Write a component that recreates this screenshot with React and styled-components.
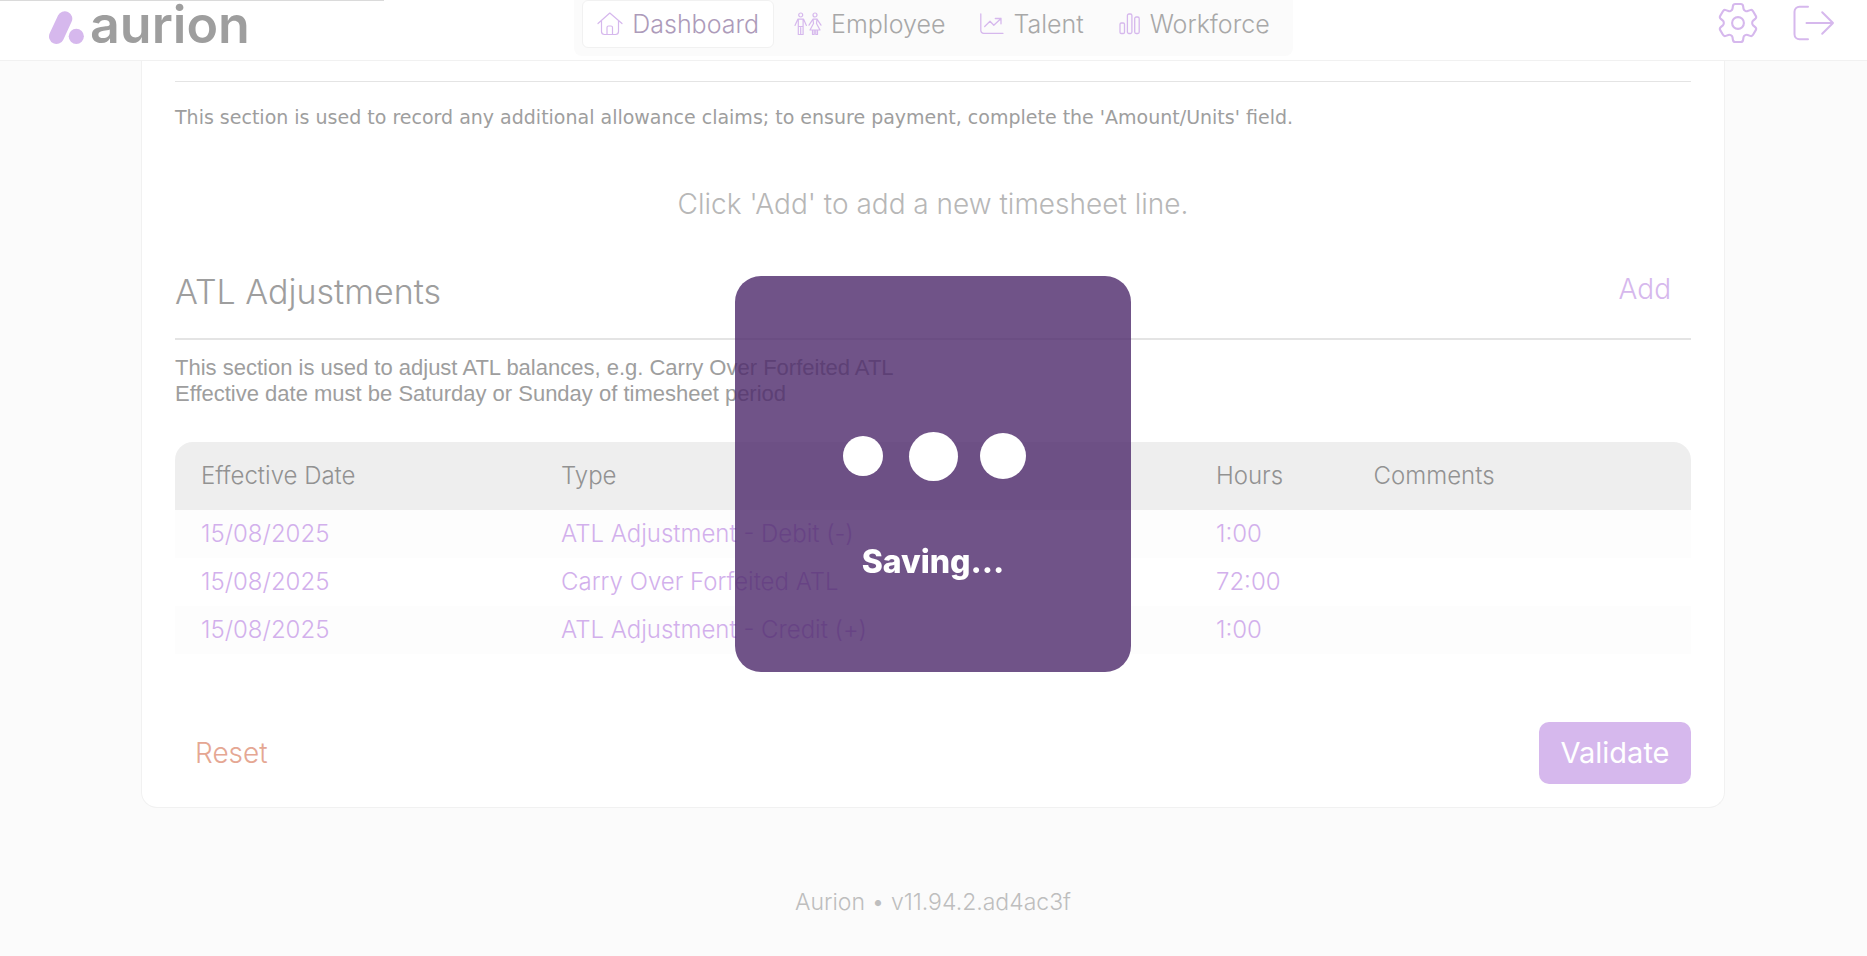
import React from "react";
import styled, { createGlobalStyle, css } from "styled-components";

const c = {
  lilac: "#d6b8ed",
  grey: "#9e9e9e",
  line: "#e4e4e4",
  edge: "#f1f1f1",
  page: "#fbfbfb",
};

const GlobalStyle = createGlobalStyle`
  *, *::before, *::after { box-sizing: border-box; }
  body {
    margin: 0;
    background: ${c.page};
    color: ${c.grey};
    font-family: Inter, "Liberation Sans", sans-serif;
    font-weight: 300;
  }
  h2, p { margin: 0; font-weight: inherit; }
  a { color: inherit; text-decoration: none; }
  button { border: 0; padding: 0; background: none; font: inherit; color: inherit; cursor: pointer; }
  svg { display: block; flex: none; fill: none; stroke: currentColor; stroke-linecap: round; stroke-linejoin: round; }
`;

const Header = styled.header`
  display: grid;
  grid-template-columns: 1fr auto 1fr;
  align-items: start;
  height: 61px;
  padding: 0 32px;
  background: #fff;
  border-bottom: 1px solid ${c.edge};
`;

const LoadBar = styled.div`
  position: absolute;
  top: 0;
  left: 0;
  width: 384px;
  height: 1px;
  background: #dadada;
`;

const Brand = styled.a`
  display: flex;
  align-items: flex-start;
  gap: 6px;
  height: 60px;
  padding-left: 17px;
`;

const BrandMark = styled.svg`
  margin-top: 10px;
  color: ${c.lilac};
`;

const BrandName = styled.span`
  font-size: 52px;
  line-height: 50px;
  font-weight: 600;
`;

const Nav = styled.nav`
  display: flex;
  gap: 5px;
  padding: 0 8px 8px;
  border-radius: 0 0 8px 8px;
  background: ${c.page};
`;

const NavItem = styled.a`
  display: flex;
  align-items: center;
  gap: 9px;
  height: 48px;
  padding: 0 14px;
  border: 1px solid transparent;
  border-radius: 6px;
  font-size: 25px;
  color: #a8a8a8;
  svg { color: ${c.lilac}; }
  ${(p) => p.$active && css`
    background: #fff;
    border-color: ${c.edge};
    color: #ad9bba;
  `}
`;

const Tools = styled.div`
  display: flex;
  justify-content: flex-end;
  align-items: center;
  gap: 35px;
  height: 46px;
  color: ${c.lilac};
`;

const Content = styled.div`
  padding: 0 142px 0 141px;
`;

const Card = styled.main`
  max-width: 1584px;
  margin: 0 auto;
  padding: 20px 33px 23px;
  background: #fff;
  border: 1px solid ${c.edge};
  border-top: 0;
  border-radius: 0 0 16px 16px;
`;

const Rule = styled.hr`
  height: 1px;
  margin: 0;
  border: 0;
  background: ${c.line};
`;

const AllowanceNote = styled.p`
  margin-top: 23px;
  font: 400 19px/24px "DejaVu Sans", sans-serif;
`;

const EmptyMessage = styled.p`
  margin-top: 55px;
  font-size: 28px;
  line-height: 40px;
  text-align: center;
  color: #b7b7b7;
`;

const SectionHead = styled.div`
  display: flex;
  justify-content: space-between;
  align-items: flex-start;
  height: 73px;
  margin-top: 43px;
  border-bottom: 2px solid ${c.line};
`;

const SectionTitle = styled.h2`
  font-size: 34px;
  line-height: 50px;
`;

const TextButton = styled.button`
  padding: 0 20px;
  font-size: 28px;
  line-height: 44px;
  color: ${(p) => (p.$danger ? "#e5a793" : c.lilac)};
`;

const SectionNote = styled.p`
  margin: 15px 0 35px;
  font: 400 22px/26px "Liberation Sans", sans-serif;
`;

const Lines = styled.table`
  width: 100%;
  table-layout: fixed;
  border-spacing: 0;
  font-size: 24px;
  text-align: left;
`;

const HeadCell = styled.th`
  width: ${(p) => p.$width || "auto"};
  height: 68px;
  padding: 0 0 2px 26px;
  background: #eee;
  font-weight: 300;
  color: #929292;
  &:first-child { border-top-left-radius: 18px; }
  &:last-child { border-top-right-radius: 18px; }
`;

const Row = styled.tr`
  background: ${(p) => (p.$shaded ? "#fdfdfd" : "#fff")};
`;

const Cell = styled.td`
  height: 48px;
  padding: 0 0 2px 26px;
  color: #d2b0ec;
`;

const Actions = styled.div`
  display: flex;
  justify-content: space-between;
  align-items: center;
  margin-top: 68px;
`;

const PrimaryButton = styled.button`
  min-width: 152px;
  height: 62px;
  padding-bottom: 2px;
  border-radius: 10px;
  background: ${c.lilac};
  font-size: 29px;
  font-weight: 400;
  color: #fff;
`;

const Footer = styled.footer`
  padding: 77px 0 36px;
  font-size: 23px;
  line-height: 34px;
  text-align: center;
  color: #bebebe;
`;

const Overlay = styled.div`
  position: fixed;
  inset: 0;
  display: flex;
  align-items: center;
  justify-content: center;
  padding: 0 1px 8px 0;
`;

const SavingPanel = styled.div`
  width: 396px;
  height: 396px;
  padding-top: 155px;
  border-radius: 26px;
  background: rgba(76, 40, 106, 0.8);
  font-size: 32px;
  line-height: 40px;
  font-weight: 800;
  text-align: center;
  color: #fff;
`;

const Dots = styled.div`
  display: grid;
  grid-template-columns: repeat(3, 70px);
  justify-content: center;
  place-items: center;
  height: 50px;
  margin-bottom: 61px;
`;

const Dot = styled.span`
  width: ${(p) => p.$size}px;
  height: ${(p) => p.$size}px;
  border-radius: 50%;
  background: #fff;
`;

const HouseIcon = () => (
  <svg width="26" height="24" viewBox="0 0 26 24" strokeWidth="1.2" aria-hidden="true">
    <path d="M1 11.5 12.8 1 25 11.5M4.5 9v10.5a3 3 0 0 0 3 3h11a3 3 0 0 0 3-3V9M10 22.5v-7a1.5 1.5 0 0 1 1.5-1.5H14a1.5 1.5 0 0 1 1.5 1.5v7" />
  </svg>
);

const PeopleIcon = () => (
  <svg width="28" height="24" viewBox="0 0 28 24" strokeWidth="1.2" aria-hidden="true">
    <circle cx="6.7" cy="3" r="2" />
    <path d="M1 13.5 3.800 7.2h5.8l2.8 6.3M4.3 7.2v15.3h1.9M9.1 7.2v15.300H7.2M6.7 15.5v7M4.3 14.5h4.8" />
    <circle cx="21" cy="3" r="2" />
    <path d="m19 7.2-4 6M23 7.2l4 6M19 7.2h4l-.5 4.3 3.5 6.500H16l3.5-6.500zM18.5 18v4.5h1.7V18M23.5 18v4.5h-1.7V18" />
  </svg>
);

const TrendIcon = () => (
  <svg width="24" height="22" viewBox="0 0 24 22" strokeWidth="1.3" aria-hidden="true">
    <path d="M.8 1v16.5a2.8 2.8 0 0 0 2.8 2.8H23M4.7 13.500l5.3-5.3 3.8 4L21 5.5M15.3 5.500H21v5.300" />
  </svg>
);

const BarsIcon = () => (
  <svg width="22" height="22" viewBox="0 0 22 22" strokeWidth="1.3" aria-hidden="true">
    <rect x="1" y="10" width="4.5" height="10.5" rx="1.3" />
    <rect x="8.4" y="1" width="4.5" height="19.5" rx="1.5" />
    <rect x="15.7" y="4" width="4.5" height="16.5" rx="1.5" />
  </svg>
);

const GearIcon = () => (
  <svg width="40" height="40" viewBox="2.5 2.5 19 19" strokeWidth="1" aria-hidden="true">
    <path d="M9.594 3.94c.09-.542.56-.94 1.11-.94h2.593c.55 0 1.02.398 1.11.94l.213 1.281c.063.374.313.686.645.87.074.04.147.083.22.127.325.196.72.257 1.075.124l1.217-.456a1.125 1.125 0 0 1 1.37.49l1.296 2.247a1.125 1.125 0 0 1-.26 1.431l-1.003.827c-.293.241-.438.613-.43.992a7.723 7.723 0 0 1 0 .255c-.008.378.137.75.43.991l1.004.827c.424.35.534.955.26 1.43l-1.298 2.247a1.125 1.125 0 0 1-1.369.491l-1.217-.456c-.355-.133-.75-.072-1.076.124a6.47 6.47 0 0 1-.22.128c-.331.183-.581.495-.644.869l-.213 1.281c-.09.543-.56.94-1.11.94h-2.594c-.55 0-1.019-.398-1.11-.94l-.213-1.281c-.062-.374-.312-.686-.644-.87a6.52 6.52 0 0 1-.22-.127c-.325-.196-.72-.257-1.076-.124l-1.217.456a1.125 1.125 0 0 1-1.369-.49l-1.297-2.247a1.125 1.125 0 0 1 .26-1.431l1.004-.827c.292-.24.437-.613.43-.991a6.932 6.932 0 0 1 0-.255c.007-.38-.138-.751-.43-.992l-1.004-.827a1.125 1.125 0 0 1-.26-1.43l1.297-2.247a1.125 1.125 0 0 1 1.37-.491l1.216.456c.356.133.751.072 1.076-.124.072-.044.146-.086.22-.128.332-.183.582-.495.644-.869l.214-1.28Z" />
    <circle cx="12" cy="12" r="2.8" />
  </svg>
);

const LogoutIcon = () => (
  <svg width="42" height="36" viewBox="0 0 42 36" strokeWidth="2" aria-hidden="true">
    <path d="M15 1.700H6.500a5 5 0 0 0-5 5v22.600a5 5 0 0 0 5 5H15M13.500 18H40M29.200 7.200 40 18 29.200 28.800" />
  </svg>
);

const navItems = [
  ["Dashboard", HouseIcon],
  ["Employee", PeopleIcon],
  ["Talent", TrendIcon],
  ["Workforce", BarsIcon],
];

const rows = [
  ["15/08/2025", "ATL Adjustment - Debit (-)", "1:00"],
  ["15/08/2025", "Carry Over Forfeited ATL", "72:00"],
  ["15/08/2025", "ATL Adjustment - Credit (+)", "1:00"],
];

export default function App() {
  return (
    <>
      <GlobalStyle />
      <LoadBar />
      <Header>
        <Brand href="#home">
          <BrandMark width="35" height="35" viewBox="0 0 35 35" aria-hidden="true">
            <path d="M15.8 8.7 7.5 26.5" strokeWidth="15" />
            <circle cx="27.3" cy="26.3" r="7.6" fill="currentColor" stroke="none" />
          </BrandMark>
          <BrandName>aurion</BrandName>
        </Brand>
        <Nav aria-label="Main">
          {navItems.map(([label, Icon], i) => (
            <NavItem key={label} href={`#${label.toLowerCase()}`} $active={i === 0}>
              <Icon />
              {label}
            </NavItem>
          ))}
        </Nav>
        <Tools>
          <button type="button" aria-label="Settings"><GearIcon /></button>
          <button type="button" aria-label="Log out"><LogoutIcon /></button>
        </Tools>
      </Header>

      <Content>
        <Card>
          <Rule />
          <AllowanceNote>
            This section is used to record any additional allowance claims; to ensure payment, complete the 'Amount/Units' field.
          </AllowanceNote>
          <EmptyMessage>Click 'Add' to add a new timesheet line.</EmptyMessage>

          <SectionHead>
            <SectionTitle>ATL Adjustments</SectionTitle>
            <TextButton type="button">Add</TextButton>
          </SectionHead>
          <SectionNote>
            This section is used to adjust ATL balances, e.g. Carry Over Forfeited ATL
            <br />
            Effective date must be Saturday or Sunday of timesheet period
          </SectionNote>

          <Lines>
            <thead>
              <tr>
                <HeadCell scope="col" $width="23.75%">Effective Date</HeadCell>
                <HeadCell scope="col" $width="43.2%">Type</HeadCell>
                <HeadCell scope="col" $width="10.4%">Hours</HeadCell>
                <HeadCell scope="col">Comments</HeadCell>
              </tr>
            </thead>
            <tbody>
              {rows.map(([date, type, hours], i) => (
                <Row key={type} $shaded={i % 2 === 0}>
                  <Cell><a href={`#line-${i + 1}`}>{date}</a></Cell>
                  <Cell>{type}</Cell>
                  <Cell>{hours}</Cell>
                  <Cell />
                </Row>
              ))}
            </tbody>
          </Lines>

          <Actions>
            <TextButton type="button" $danger>Reset</TextButton>
            <PrimaryButton type="button">Validate</PrimaryButton>
          </Actions>
        </Card>

        <Footer>Aurion • v11.94.2.ad4ac3f</Footer>
      </Content>

      <Overlay>
        <SavingPanel role="status">
          <Dots aria-hidden="true">
            <Dot $size={40} />
            <Dot $size={49} />
            <Dot $size={46} />
          </Dots>
          Saving...
        </SavingPanel>
      </Overlay>
    </>
  );
}
